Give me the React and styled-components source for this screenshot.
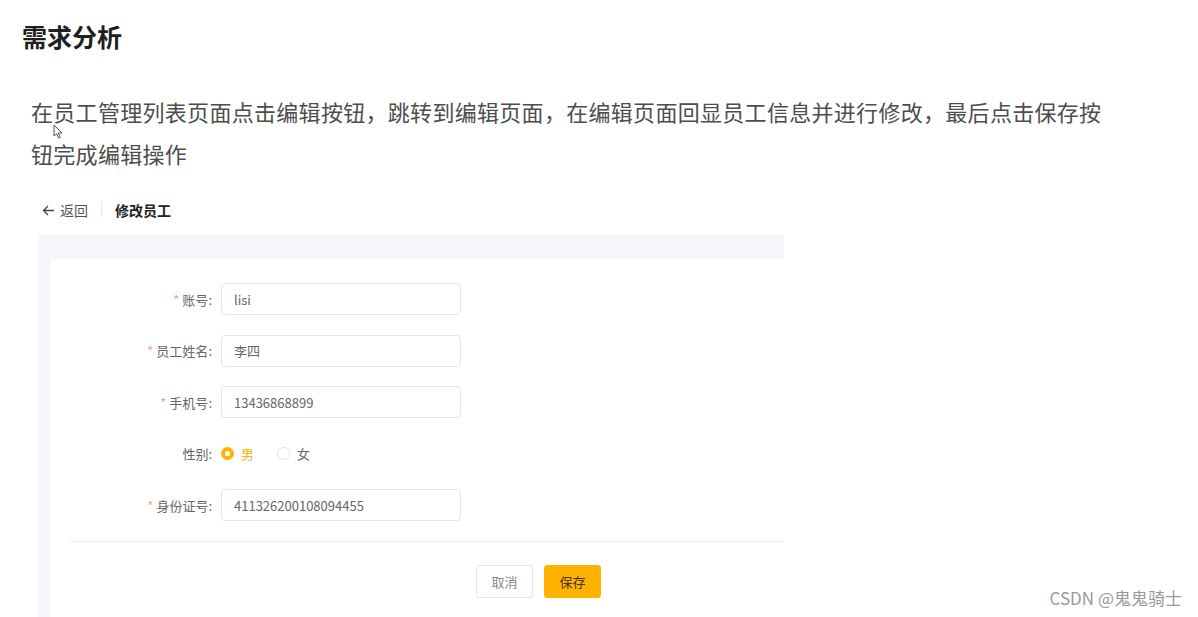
import styled, { createGlobalStyle } from 'styled-components';

const GlobalStyle = createGlobalStyle`
  html, body {
    margin: 0;
    padding: 0;
    height: 617px;
    overflow: hidden;
    background: #fff;
    font-family: "Noto Sans CJK SC", "Noto Sans", sans-serif;
  }
`;

const Page = styled.div`
  position: relative;
  width: 1198px;
  height: 617px;
  overflow: hidden;
  padding-left: 22px;
  box-sizing: border-box;
`;

const Title = styled.h2`
  margin: 0;
  padding-top: 24px;
  font-size: 25px;
  line-height: 25px;
  font-weight: 700;
  color: #1f1f1f;
`;

const Desc = styled.p`
  margin: 41px 0 0 9px;
  width: 1080px;
  font-size: 22px;
  line-height: 42px;
  letter-spacing: 0.3px;
  color: #4d4d4d;
`;

const Shot = styled.div`
  margin: 12px 0 0 16px;
  width: 746px;
`;

const TopBar = styled.div`
  display: flex;
  align-items: center;
  height: 48px;
  padding-left: 4px;
  font-size: 14px;
  color: #555;
`;

const Back = styled.span`
  display: flex;
  align-items: center;
  gap: 5px;
`;

const Divider = styled.span`
  width: 1px;
  height: 16px;
  background: #e8e8e8;
  margin: 0 13px;
`;

const PageName = styled.span`
  font-weight: 700;
  color: #222;
`;

const Panel = styled.div`
  background: #f5f5fb;
  padding: 25px 0 0 12px;
  height: 400px;
`;

const Card = styled.div`
  background: #fff;
  height: 100%;
  padding-top: 24px;
  box-sizing: border-box;
`;

const Row = styled.div`
  display: flex;
  align-items: center;
  height: 32px;
  margin-bottom: 19.5px;
`;

const Label = styled.label`
  width: 162px;
  text-align: right;
  padding-right: 9px;
  font-size: 13px;
  color: #666;
`;

const Star = styled.span`
  color: #f3a0a0;
  margin-right: 3px;
`;

const Input = styled.div`
  width: 240px;
  height: 32px;
  box-sizing: border-box;
  border: 1px solid #e4e6eb;
  border-radius: 4px;
  padding-left: 12px;
  display: flex;
  align-items: center;
  font-size: 13px;
  color: #666;
`;

const Radio = styled.span`
  display: flex;
  align-items: center;
  gap: 7px;
  margin-right: 23px;
  font-size: 13px;
  color: ${({ checked }) => (checked ? '#ffb300' : '#666')};
  &::before {
    content: '';
    width: ${({ checked }) => (checked ? '5px' : '11px')};
    height: ${({ checked }) => (checked ? '5px' : '11px')};
    border-radius: 50%;
    background: #fff;
    border: ${({ checked }) => (checked ? '4px solid #ffb300' : '1px solid #e2e2e2')};
  }
`;

const Line = styled.div`
  height: 1px;
  background: #f3f3f7;
  margin: 8px 0 0 18px;
`;

const Actions = styled.div`
  display: flex;
  gap: 11px;
  padding: 23px 0 0 426px;
`;

const Button = styled.button`
  width: 57px;
  height: 33px;
  border-radius: 3px;
  font-family: inherit;
  font-size: 13px;
  border: 1px solid ${({ primary }) => (primary ? '#ffb300' : '#e6e6ea')};
  background: ${({ primary }) => (primary ? '#ffb300' : '#fff')};
  color: ${({ primary }) => (primary ? '#4a3200' : '#888')};
`;

const Watermark = styled.div`
  position: absolute;
  right: 16px;
  bottom: 7px;
  font-size: 17px;
  color: #9a9a9a;
`;

const Cursor = styled.svg`
  position: absolute;
  left: 53px;
  top: 124px;
`;

const fields = [
  { label: '账号', value: 'lisi', required: true },
  { label: '员工姓名', value: '李四', required: true },
  { label: '手机号', value: '13436868899', required: true },
];

export default function App() {
  return (
    <>
      <GlobalStyle />
      <Page>
        <Title>需求分析</Title>
        <Desc>
          在员工管理列表页面点击编辑按钮，跳转到编辑页面，在编辑页面回显员工信息并进行修改，最后点击保存按钮完成编辑操作
        </Desc>
        <Cursor width="11" height="15" viewBox="0 0 11 15">
          <path d="M1 1 L1 12 L3.6 9.6 L5.6 14 L7.2 13.3 L5.3 9 L9 9 Z" fill="#fff" stroke="#555" strokeWidth="1" />
        </Cursor>

        <Shot>
          <TopBar>
            <Back>
              <svg width="13" height="13" viewBox="0 0 13 13" fill="none" stroke="#444" strokeWidth="1.3">
                <path d="M12 6.5 H1.5 M6 2 L1.5 6.5 L6 11" />
              </svg>
              返回
            </Back>
            <Divider />
            <PageName>修改员工</PageName>
          </TopBar>
          <Panel>
            <Card>
              {fields.map((f) => (
                <Row key={f.label}>
                  <Label>
                    {f.required && <Star>*</Star>}
                    {f.label}:
                  </Label>
                  <Input>{f.value}</Input>
                </Row>
              ))}
              <Row>
                <Label>性别:</Label>
                <Radio checked>男</Radio>
                <Radio>女</Radio>
              </Row>
              <Row>
                <Label>
                  <Star>*</Star>身份证号:
                </Label>
                <Input>411326200108094455</Input>
              </Row>
              <Line />
              <Actions>
                <Button>取消</Button>
                <Button primary>保存</Button>
              </Actions>
            </Card>
          </Panel>
        </Shot>
        <Watermark>CSDN @鬼鬼骑士</Watermark>
      </Page>
    </>
  );
}
